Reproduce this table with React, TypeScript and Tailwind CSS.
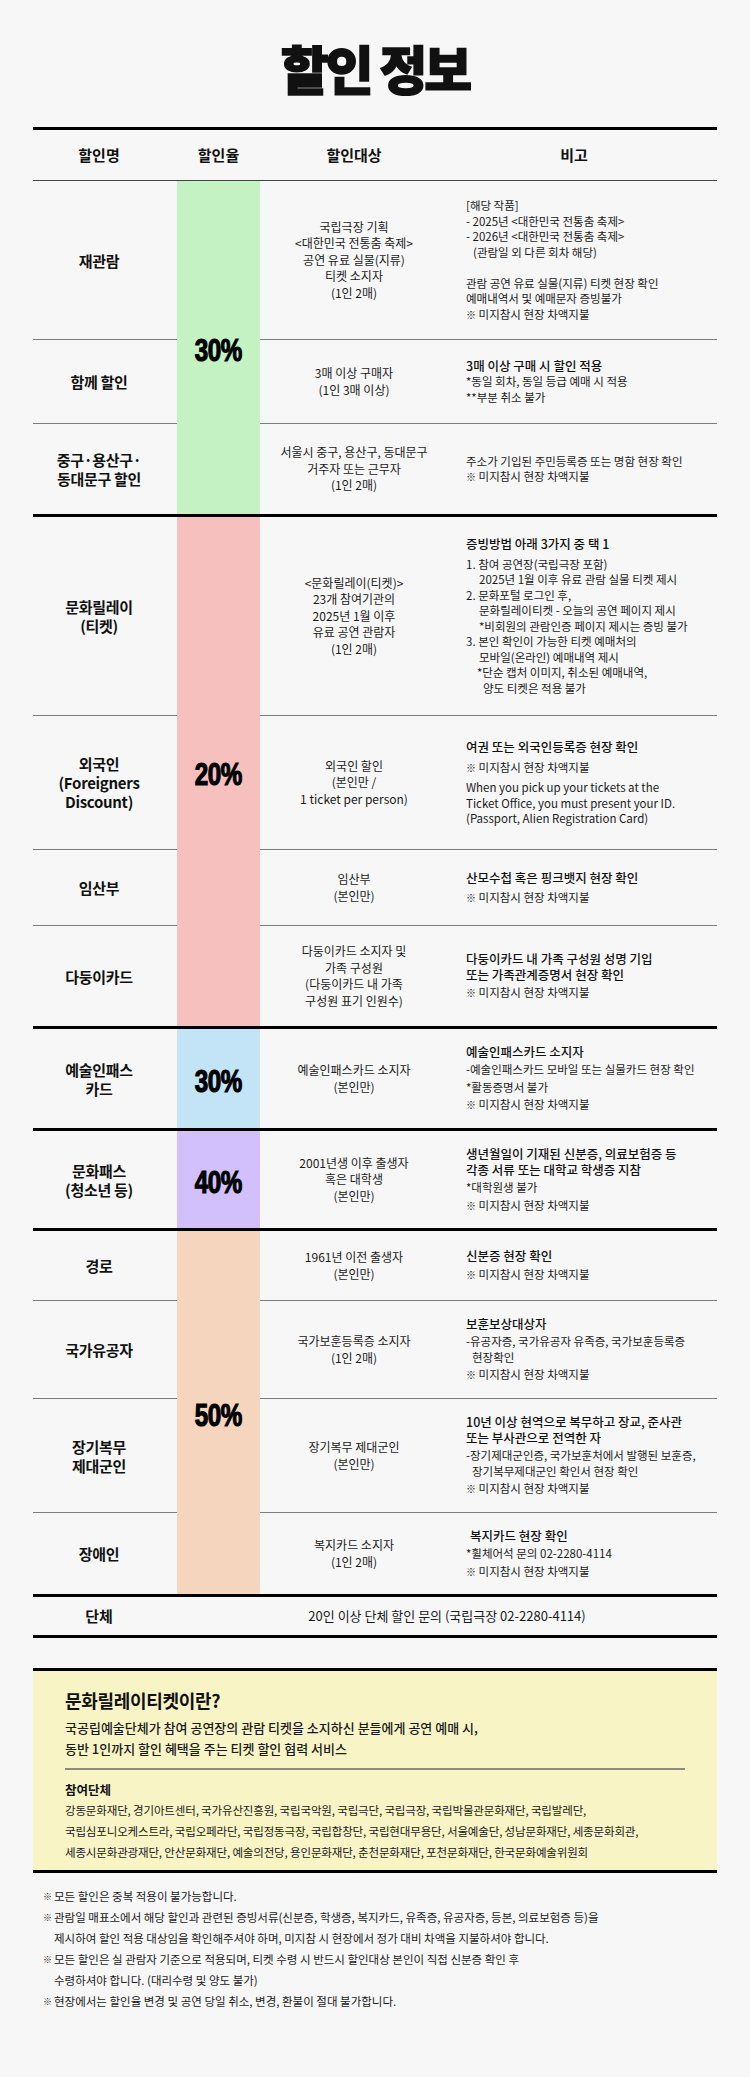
import clsx from "clsx";

type Line = string | { t: string; c: string };
type Para = { lines: Line[]; lead?: boolean; c?: string };
type Row = { name: string[]; target: string[]; notes: Para[]; h: string; gap?: string };
type Group = { rate: string; bg: string; rows: Row[] };

const MISS = "※ 미지참시 현장 차액지불";

const groups: Group[] = [
  {
    rate: "30%",
    bg: "bg-[#c4f2c3]",
    rows: [
      {
        name: ["재관람"],
        h: "h-[159px]",
        target: ["국립극장 기획", "<대한민국 전통춤 축제>", "공연 유료 실물(지류)", "티켓 소지자", "(1인 2매)"],
        notes: [
          {
            lines: [
              "[해당 작품]",
              "- 2025년 <대한민국 전통춤 축제>",
              "- 2026년 <대한민국 전통춤 축제>",
              { t: "(관람일 외 다른 회차 해당)", c: "pl-[7px]" },
              "\u00a0",
              "관람 공연 유료 실물(지류) 티켓 현장 확인",
              "예매내역서 및 예매문자 증빙불가",
              MISS,
            ],
          },
        ],
      },
      {
        name: ["함께 할인"],
        h: "h-[84px]",
        target: ["3매 이상 구매자", "(1인 3매 이상)"],
        notes: [
          { lead: true, lines: ["3매 이상 구매 시 할인 적용"] },
          { lines: ["*동일 회차, 동일 등급 예매 시 적용", "**부분 취소 불가"] },
        ],
      },
      {
        name: ["중구·용산구·", "동대문구 할인"],
        h: "h-[93px]",
        target: ["서울시 중구, 용산구, 동대문구", "거주자 또는 근무자", "(1인 2매)"],
        notes: [{ lines: ["주소가 기입된 주민등록증 또는 명함 현장 확인", MISS] }],
      },
    ],
  },
  {
    rate: "20%",
    bg: "bg-[#f5c0be]",
    rows: [
      {
        name: ["문화릴레이", "(티켓)"],
        h: "h-[199px]",
        target: ["<문화릴레이(티켓)>", "23개 참여기관의", "2025년 1월 이후", "유료 공연 관람자", "(1인 2매)"],
        notes: [
          { lead: true, c: "mb-[5px]", lines: ["증빙방법 아래 3가지 중 택 1"] },
          {
            lines: [
              "1. 참여 공연장(국립극장 포함)",
              { t: "2025년 1월 이후 유료 관람 실물 티켓 제시", c: "pl-[13px]" },
              "2. 문화포털 로그인 후,",
              { t: "문화릴레이티켓 - 오늘의 공연 페이지 제시", c: "pl-[13px]" },
              { t: "*비회원의 관람인증 페이지 제시는 증빙 불가", c: "pl-[13px]" },
              "3. 본인 확인이 가능한 티켓 예매처의",
              { t: "모바일(온라인) 예매내역 제시", c: "pl-[13px]" },
              { t: "*단순 캡처 이미지, 취소된 예매내역,", c: "pl-[11px]" },
              { t: "양도 티켓은 적용 불가", c: "pl-[17px]" },
            ],
          },
        ],
      },
      {
        name: ["외국인", "(Foreigners", "Discount)"],
        h: "h-[134px]",
        gap: "gap-[5px]",
        target: ["외국인 할인", "(본인만 /", "1 ticket per person)"],
        notes: [
          { lead: true, lines: ["여권 또는 외국인등록증 현장 확인"] },
          { lines: [MISS] },
          {
            lines: [
              "When you pick up your tickets at the",
              "Ticket Office, you must present your ID.",
              "(Passport, Alien Registration Card)",
            ],
          },
        ],
      },
      {
        name: ["임산부"],
        h: "h-[76px]",
        gap: "gap-[4px]",
        target: ["임산부", "(본인만)"],
        notes: [{ lead: true, lines: ["산모수첩 혹은 핑크뱃지 현장 확인"] }, { lines: [MISS] }],
      },
      {
        name: ["다둥이카드"],
        h: "h-[103px]",
        gap: "gap-[2px]",
        target: ["다둥이카드 소지자 및", "가족 구성원", "(다둥이카드 내 가족", "구성원 표기 인원수)"],
        notes: [
          { lead: true, lines: ["다둥이카드 내 가족 구성원 성명 기입", "또는 가족관계증명서 현장 확인"] },
          { lines: [MISS] },
        ],
      },
    ],
  },
  {
    rate: "30%",
    bg: "bg-[#c3e3f6]",
    rows: [
      {
        name: ["예술인패스", "카드"],
        h: "h-[102px]",
        gap: "gap-[2px]",
        target: ["예술인패스카드 소지자", "(본인만)"],
        notes: [
          { lead: true, lines: ["예술인패스카드 소지자"] },
          { lines: ["-예술인패스카드 모바일 또는 실물카드 현장 확인"] },
          { lines: ["*활동증명서 불가"] },
          { lines: [MISS] },
        ],
      },
    ],
  },
  {
    rate: "40%",
    bg: "bg-[#d1c0fb]",
    rows: [
      {
        name: ["문화패스", "(청소년 등)"],
        h: "h-[100px]",
        gap: "gap-[2px]",
        target: ["2001년생 이후 출생자", "혹은 대학생", "(본인만)"],
        notes: [
          { lead: true, lines: ["생년월일이 기재된 신분증, 의료보험증 등", "각종 서류 또는 대학교 학생증 지참"] },
          { lines: ["*대학원생 불가"] },
          { lines: [MISS] },
        ],
      },
    ],
  },
  {
    rate: "50%",
    bg: "bg-[#f6d5bf]",
    rows: [
      {
        name: ["경로"],
        h: "h-[70px]",
        gap: "gap-[3px]",
        target: ["1961년 이전 출생자", "(본인만)"],
        notes: [{ lead: true, lines: ["신분증 현장 확인"] }, { lines: [MISS] }],
      },
      {
        name: ["국가유공자"],
        h: "h-[98px]",
        gap: "gap-[2px]",
        target: ["국가보훈등록증 소지자", "(1인 2매)"],
        notes: [
          { lead: true, lines: ["보훈보상대상자"] },
          { lines: ["-유공자증, 국가유공자 유족증, 국가보훈등록증", { t: "현장확인", c: "pl-[6px]" }] },
          { lines: [MISS] },
        ],
      },
      {
        name: ["장기복무", "제대군인"],
        h: "h-[114px]",
        gap: "gap-[2px]",
        target: ["장기복무 제대군인", "(본인만)"],
        notes: [
          { lead: true, lines: ["10년 이상 현역으로 복무하고 장교, 준사관", "또는 부사관으로 전역한 자"] },
          {
            lines: [
              "-장기제대군인증, 국가보훈처에서 발행된 보훈증,",
              { t: "장기복무제대군인 확인서 현장 확인", c: "pl-[6px]" },
            ],
          },
          { lines: [MISS] },
        ],
      },
      {
        name: ["장애인"],
        h: "h-[84px]",
        gap: "gap-[2px]",
        target: ["복지카드 소지자", "(1인 2매)"],
        notes: [
          { lead: true, lines: [{ t: "복지카드 현장 확인", c: "pl-[4px]" }] },
          { lines: ["*휠체어석 문의 02-2280-4114"] },
          { lines: [MISS] },
        ],
      },
    ],
  },
];

const orgs = [
  "강동문화재단, 경기아트센터, 국가유산진흥원, 국립국악원, 국립극단, 국립극장, 국립박물관문화재단, 국립발레단,",
  "국립심포니오케스트라, 국립오페라단, 국립정동극장, 국립합창단, 국립현대무용단, 서울예술단, 성남문화재단, 세종문화회관,",
  "세종시문화관광재단, 안산문화재단, 예술의전당, 용인문화재단, 춘천문화재단, 포천문화재단, 한국문화예술위원회",
];

const footnotes = [
  ["모든 할인은 중복 적용이 불가능합니다."],
  [
    "관람일 매표소에서 해당 할인과 관련된 증빙서류(신분증, 학생증, 복지카드, 유족증, 유공자증, 등본, 의료보험증 등)을",
    "제시하여 할인 적용 대상임을 확인해주셔야 하며, 미지참 시 현장에서 정가 대비 차액을 지불하셔야 합니다.",
  ],
  [
    "모든 할인은 실 관람자 기준으로 적용되며, 티켓 수령 시 반드시 할인대상 본인이 직접 신분증 확인 후",
    "수령하셔야 합니다. (대리수령 및 양도 불가)",
  ],
  ["현장에서는 할인율 변경 및 공연 당일 취소, 변경, 환불이 절대 불가합니다."],
];

const Txt = ({ t }: { t: string }) =>
  t.startsWith("※ ") ? (
    <>
      <span className="text-[10px] font-bold">※</span> {t.slice(2)}
    </>
  ) : (
    <>{t}</>
  );

const THICK = "border-b-[3px] border-black";
const THIN = "border-b border-[#7d7d7d]";

export default function App() {
  return (
    <div className="min-h-[2077px] w-full bg-[#f7f7f7] px-[33px] pt-[38px] font-['Noto_Sans_CJK_KR','Noto_Sans',sans-serif] text-[#111]">
      {/* Title */}
      <h1 className="text-center text-[52px] font-black leading-[60px] tracking-[-3px] text-[#111] [-webkit-text-stroke:1.5px_#111]">
        할인 정보
      </h1>

      {/* Discount table */}
      <table className="mt-[29px] w-full table-fixed border-separate border-spacing-0">
        <colgroup>
          <col className="w-[144px]" />
          <col className="w-[83px]" />
          <col className="w-[188px]" />
          <col />
        </colgroup>
        <thead>
          <tr className="h-[54px] text-[15px] font-bold text-[#111]">
            <th className="border-t-[3px] border-b border-black border-b-[#444] pr-[12px] font-bold">할인명</th>
            <th className="border-t-[3px] border-b border-black border-b-[#444] font-bold">할인율</th>
            <th className="border-t-[3px] border-b border-black border-b-[#444] font-bold">할인대상</th>
            <th className="border-t-[3px] border-b border-black border-b-[#444] pr-[17px] font-bold">비고</th>
          </tr>
        </thead>
        <tbody>
          {groups.map((g, gi) =>
            g.rows.map((r, ri) => {
              const last = ri === g.rows.length - 1;
              const line = last ? THICK : THIN;
              return (
                <tr key={`${gi}-${ri}`} className={r.h}>
                  <td className={clsx("pr-[12px] text-center align-middle text-[15px] font-bold leading-[19px] tracking-[-0.3px] text-[#111]", line)}>
                    {r.name.map((n) => (
                      <div key={n}>{n}</div>
                    ))}
                  </td>
                  {ri === 0 && (
                    <td rowSpan={g.rows.length} className={clsx("pt-[6px] text-center align-middle", g.bg, THICK)}>
                      <span className="inline-block scale-x-[0.78] font-['Liberation_Sans',sans-serif] text-[31px] font-bold leading-none tracking-[-0.5px] text-black [-webkit-text-stroke:1.2px_#000]">
                        {g.rate}
                      </span>
                    </td>
                  )}
                  <td className={clsx("text-center align-middle text-[12px] leading-[16.5px] text-[#1a1a1a]", line)}>
                    {r.target.map((t) => (
                      <div key={t} className="whitespace-nowrap">
                        {t}
                      </div>
                    ))}
                  </td>
                  <td className={clsx("pl-[18px] text-left align-middle", line)}>
                    <div className={clsx("flex flex-col", r.gap)}>
                      {r.notes.map((p, pi) => (
                        <div
                          key={pi}
                          className={clsx(
                            p.lead
                              ? "text-[12.5px] font-medium leading-[16px] text-[#111]"
                              : "text-[11.5px] leading-[15.5px] text-[#1a1a1a]",
                            p.c
                          )}
                        >
                          {p.lines.map((l, li) => {
                            const o = typeof l === "string" ? { t: l, c: "" } : l;
                            return (
                              <div key={li} className={clsx("whitespace-nowrap", o.c)}>
                                <Txt t={o.t} />
                              </div>
                            );
                          })}
                        </div>
                      ))}
                    </div>
                  </td>
                </tr>
              );
            })
          )}
          <tr className="h-[41px]">
            <td className={clsx("pr-[12px] text-center align-middle text-[15px] font-bold text-[#111]", THICK)}>단체</td>
            <td colSpan={3} className={clsx("text-center align-middle text-[13px] text-[#1a1a1a]", THICK)}>
              20인 이상 단체 할인 문의 (국립극장 02-2280-4114)
            </td>
          </tr>
        </tbody>
      </table>

      {/* 문화릴레이티켓 info box */}
      <section className="mt-[30px] border-y-[3px] border-black bg-[#f8f4c5] px-[32px] pt-[17px] pb-[7px]">
        <h2 className="text-[18px] font-bold leading-[24px] tracking-[-0.3px] text-[#111]">문화릴레이티켓이란?</h2>
        <p className="mt-[5px] text-[13px] font-medium leading-[21px] text-[#1a1a1a]">
          국공립예술단체가 참여 공연장의 관람 티켓을 소지하신 분들에게 공연 예매 시,
          <br />
          동반 1인까지 할인 혜택을 주는 티켓 할인 협력 서비스
        </p>
        <div className="mt-[9px] h-[2px] bg-[#8e8b78]" />
        <h3 className="mt-[9px] text-[12.5px] font-bold leading-[21px] text-[#111]">참여단체</h3>
        <div className="text-[11.5px] leading-[21px] tracking-[-0.15px] text-[#1a1a1a]">
          {orgs.map((o) => (
            <div key={o} className="whitespace-nowrap">
              {o}
            </div>
          ))}
        </div>
      </section>

      {/* Footnotes */}
      <ul className="mt-[13px] pl-[10px] text-[11.5px] leading-[21px] text-[#1a1a1a]">
        {footnotes.map((f, i) => (
          <li key={i} className="flex">
            <span className="w-[11px] shrink-0 text-[9px] font-bold">※</span>
            <div>
              {f.map((l) => (
                <div key={l} className="whitespace-nowrap">
                  {l}
                </div>
              ))}
            </div>
          </li>
        ))}
      </ul>
    </div>
  );
}
